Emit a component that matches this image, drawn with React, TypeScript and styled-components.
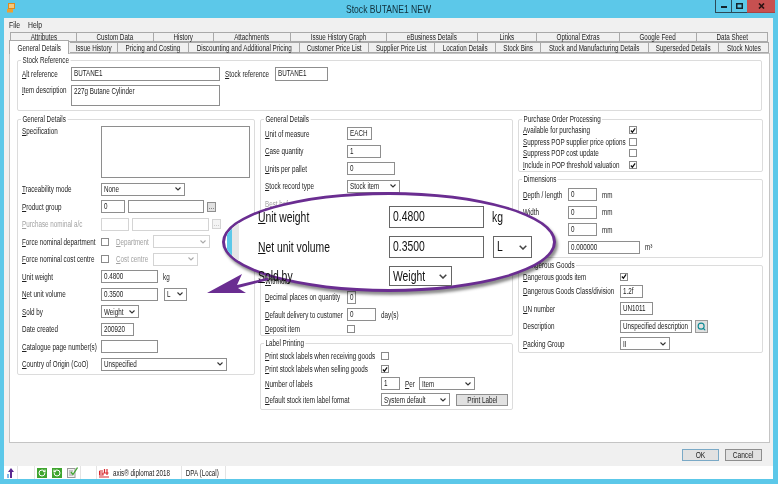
import React from 'react'
import styled, { createGlobalStyle } from 'styled-components'
import { RotateCw, RotateCcw, Search } from 'lucide-react'

const GlobalStyle = createGlobalStyle`
  html, body {
    margin: 0;
    padding: 0;
    background: #5cc8e9;
  }
  * {
    box-sizing: border-box;
  }
`

// the reference was squashed sideways, no installed font is that narrow
const SQUASH = 0.74

const Screen = styled.div`
  position: relative;
  width: 778px;
  height: 484px;
  overflow: hidden;
  display: flex;
  flex-direction: column;
  background: #5cc8e9;
  color: #222;
  font-family: 'Liberation Sans', Arial, sans-serif;
  font-size: 8.5px;
  filter: blur(0.3px);
`

const Squeeze = styled.span<{ $center?: boolean }>`
  display: inline-block;
  flex: none;
  white-space: nowrap;
  transform: scaleX(${SQUASH});
  transform-origin: ${(p) => (p.$center ? 'center' : 'left center')};
`

const TitleBar = styled.div`
  height: 18px;
  display: grid;
  grid-template-columns: 1fr auto 1fr;
  align-items: start;
`

const AppIcon = styled.svg`
  width: 9px;
  height: 10px;
  margin: 3px 0 0 7px;
`

const Title = styled.div`
  font-size: 11.6px;
  line-height: 18px;
  color: #10303c;
`

const Controls = styled.div`
  justify-self: end;
  display: flex;
  height: 13px;
  margin-right: 3px;
`

const Control = styled.div<{ $close?: boolean }>`
  width: ${(p) => (p.$close ? '28px' : '16px')};
  display: flex;
  align-items: center;
  justify-content: center;
  background: ${(p) => (p.$close ? '#c75050' : '#5cc8e9')};
  border: 1px solid ${(p) => (p.$close ? '#a94444' : '#2c4a58')};
  border-top: 0;
  border-right-width: 0;
  border-left-width: ${(p) => (p.$close ? '0' : '1px')};
`

const Client = styled.div`
  flex: 1;
  margin: 0 5px 5px 4px;
  display: flex;
  flex-direction: column;
  background: #f0f0f0;
`

const Menu = styled.div`
  height: 14px;
  display: flex;
  align-items: center;
  gap: 4px;
  padding: 0 0 1px 5px;
  font-size: 9.2px;
`

const TabRow = styled.div<{ $inset: number; $h: number }>`
  display: flex;
  align-items: flex-end;
  height: ${(p) => p.$h}px;
  margin-left: ${(p) => p.$inset}px;
`

const TabBox = styled.div<{ $w: number; $active?: boolean }>`
  position: relative;
  z-index: ${(p) => (p.$active ? 2 : 1)};
  flex: none;
  width: ${(p) => p.$w}px;
  height: ${(p) => (p.$active ? '14px' : '100%')};
  margin-bottom: ${(p) => (p.$active ? '-1px' : '0')};
  margin-right: ${(p) => (p.$active ? '1px' : '0')};
  display: flex;
  align-items: center;
  justify-content: center;
  background: ${(p) => (p.$active ? '#fff' : '#f0f0f0')};
  border: 1px solid #a9a9a9;
  border-left-width: ${(p) => (p.$active ? '1px' : '0')};
  border-bottom-width: ${(p) => (p.$active ? '0' : '1px')};

  &:first-child {
    border-left-width: 1px;
  }
`

const Panel = styled.div`
  flex: 1;
  margin: 0 3px 0 5px;
  padding: 6px 7px;
  display: flex;
  flex-direction: column;
  gap: 8px;
  background: #fff;
  border: 1px solid #c4c4c4;
`

const Group = styled.div<{ $h?: number; $top: number }>`
  position: relative;
  flex: none;
  height: ${(p) => (p.$h ? `${p.$h}px` : 'auto')};
  padding: ${(p) => p.$top}px 4px 0;
  border: 1px solid #dcdcdc;
  border-radius: 2px;
`

const GroupTitle = styled.div`
  position: absolute;
  top: -5px;
  left: 3px;
  padding: 0 2px;
  background: #fff;
  line-height: 9px;
  white-space: nowrap;
  transform: scaleX(${SQUASH});
  transform-origin: left center;
`

const Columns = styled.div`
  display: flex;
  gap: 5px;
  align-items: flex-start;
`

const Column = styled.div<{ $w: number }>`
  flex: none;
  width: ${(p) => p.$w}px;
  display: flex;
  flex-direction: column;
  gap: 7px;
`

const Stack = styled.div<{ $gap?: number }>`
  display: flex;
  flex-direction: column;
  gap: ${(p) => p.$gap ?? 4.5}px;
`

const Row = styled.div<{ $h?: number; $gap?: number; $end?: boolean }>`
  --gap: ${(p) => p.$gap ?? 5}px;
  flex: none;
  display: flex;
  align-items: ${(p) => (p.$end ? 'flex-end' : 'center')};
  height: ${(p) => p.$h ?? 13}px;
  gap: var(--gap);
`

const TopRow = styled(Row)`
  align-items: flex-start;
`

const SideCaption = styled.div<{ $w: number; $off?: boolean }>`
  flex: none;
  width: ${(p) => p.$w}px;
  color: ${(p) => (p.$off ? '#a2a2a2' : 'inherit')};
  white-space: nowrap;
  line-height: 10px;
  transform: scaleX(${SQUASH});
  transform-origin: left center;
`

// its width runs up to the first control of the row, so the row gap is taken back
const Caption = styled(SideCaption)`
  margin-right: calc(var(--gap) * -1);
`

const Unit = styled.div`
  white-space: nowrap;
  transform: scaleX(${SQUASH});
  transform-origin: left center;
`

const FieldBox = styled.div<{ $w: number; $h?: number; $off?: boolean }>`
  flex: none;
  width: ${(p) => p.$w}px;
  height: ${(p) => p.$h ?? 13}px;
  padding: 0 2px;
  line-height: 10px;
  overflow: hidden;
  background: #fff;
  border: 1px solid ${(p) => (p.$off ? '#d4d4d4' : '#8e8e8e')};
`

const SelectBox = styled.div<{ $w: number; $off?: boolean }>`
  flex: none;
  position: relative;
  width: ${(p) => p.$w}px;
  height: 13px;
  display: flex;
  align-items: center;
  padding: 0 2px;
  background: #fff;
  border: 1px solid ${(p) => (p.$off ? '#d4d4d4' : '#8e8e8e')};
`

const Chevron = styled.svg`
  position: absolute;
  right: 3px;
  top: 3.5px;
  width: 6px;
  height: 4px;
`

const EllipsisButton = styled.div<{ $off?: boolean }>`
  flex: none;
  width: 9px;
  height: 10px;
  display: flex;
  align-items: center;
  justify-content: center;
  font-size: 7px;
  line-height: 6px;
  color: ${(p) => (p.$off ? '#aaa' : '#333')};
  background: ${(p) => (p.$off ? '#f4f4f4' : '#e1e1e1')};
  border: 1px solid ${(p) => (p.$off ? '#d4d4d4' : '#8e8e8e')};
`

const CheckBox = styled.div`
  flex: none;
  width: 8px;
  height: 8px;
  display: flex;
  align-items: center;
  justify-content: center;
  background: #fff;
  border: 1px solid #8a8a8a;
`

const PrintButton = styled.div`
  flex: none;
  width: 52px;
  height: 12px;
  margin-left: 1px;
  display: flex;
  align-items: center;
  justify-content: center;
  background: #e1e1e1;
  border: 1px solid #8e8e8e;
`

const LookupButton = styled.div`
  flex: none;
  width: 13px;
  height: 13px;
  margin-left: -2px;
  display: flex;
  align-items: center;
  justify-content: center;
  color: #0f8a94;
  background: #e1e1e1;
  border: 1px solid #9a9a9a;
`

const Footer = styled.div`
  height: 23px;
  display: flex;
  justify-content: flex-end;
  gap: 6px;
  padding: 6px 11px 0 0;
`

const FooterButton = styled.div<{ $primary?: boolean }>`
  width: 37px;
  height: 12px;
  display: flex;
  align-items: center;
  justify-content: center;
  background: #e1e1e1;
  border: 1px solid ${(p) => (p.$primary ? '#7aa9c6' : '#8e8e8e')};
  font-size: 9px;
`

const StatusBar = styled.div`
  height: 13px;
  display: flex;
  align-items: center;
  background: #fff;
`

const StatusCell = styled.div<{ $w: number; $gap?: number }>`
  flex: none;
  width: ${(p) => p.$w}px;
  height: 100%;
  display: flex;
  align-items: center;
  gap: ${(p) => p.$gap ?? 0}px;
  padding-left: 2px;
  border-right: 1px solid #e4e4e4;

  svg {
    flex: none;
  }
`

const GreenTile = styled.div`
  width: 10px;
  height: 10px;
  display: flex;
  align-items: center;
  justify-content: center;
  background: #3fa52f;
  color: #fff;
`

const Lens = styled.div`
  position: absolute;
  isolation: isolate;
  left: 222px;
  top: 192px;
  width: 334px;
  height: 100px;
  padding: 14px 0 0 36px;
  display: flex;
  flex-direction: column;
  gap: 8px;
  font-size: 14px;
  color: #111;
`

const LensFill = styled.div`
  position: absolute;
  inset: 0;
  z-index: -1;
  overflow: hidden;
  display: flex;
  align-items: center;
  padding-left: 2px;
  background: #fff;
  border: 3px solid #6a2d91;
  border-radius: 50%;
  box-shadow: 2px 3px 3px rgba(0, 0, 0, 0.45);
`

const Sliver = styled.div`
  width: 12px;
  height: 100%;
  background: linear-gradient(90deg, #5cc8e9 0 5px, #e6e6e6 5px 12px);
`

const LensRow = styled.div<{ $h: number }>`
  flex: none;
  height: ${(p) => p.$h}px;
  display: flex;
  align-items: center;
`

const LensLabel = styled.div`
  flex: none;
  width: 131px;
  white-space: nowrap;
  transform: scaleX(${SQUASH});
  transform-origin: left center;
`

const LensField = styled.div<{ $w: number }>`
  position: relative;
  flex: none;
  width: ${(p) => p.$w}px;
  height: 100%;
  padding: 0 3px;
  line-height: 18px;
  background: #fff;
  border: 1px solid #666;
`

const LensChevron = styled.svg`
  position: absolute;
  right: 4px;
  top: 50%;
  width: 8px;
  height: 5px;
  margin-top: -2px;
`

const LensUnit = styled.div`
  margin-left: 8px;
  transform: scaleX(${SQUASH});
  transform-origin: left center;
`

const LensGap = styled.div`
  margin-left: 9px;
  height: 100%;
  display: flex;
`

const ArrowMark = styled.svg`
  position: absolute;
  left: 200px;
  top: 265px;
  width: 75px;
  height: 35px;
`

const Tab = ({ w, active, children }: { w: number; active?: boolean; children: string }) => (
  <TabBox $w={w} $active={active}>
    <Squeeze $center>{children}</Squeeze>
  </TabBox>
)

const Field = ({ w, h, off, children }: { w: number; h?: number; off?: boolean; children?: string }) => (
  <FieldBox $w={w} $h={h} $off={off}>
    <Squeeze>{children}</Squeeze>
  </FieldBox>
)

const Select = ({ w, off, children }: { w: number; off?: boolean; children?: string }) => (
  <SelectBox $w={w} $off={off}>
    <Squeeze>{children}</Squeeze>
    <Chevron viewBox="0 0 6 4">
      <path d="M0.5 0.5 L3 3 L5.5 0.5" fill="none" stroke={off ? '#aaa' : '#333'} strokeWidth="1.1" />
    </Chevron>
  </SelectBox>
)

const Check = () => (
  <CheckBox>
    <svg width="7" height="7" viewBox="0 0 7 7">
      <path d="M1 3.5 L2.8 5.5 L6 1" fill="none" stroke="#111" strokeWidth="1.4" />
    </svg>
  </CheckBox>
)

const LensCaret = () => (
  <LensChevron viewBox="0 0 8 5">
    <path d="M0.7 0.7 L4 4 L7.3 0.7" fill="none" stroke="#444" strokeWidth="1.5" />
  </LensChevron>
)

const Hot = ({ children }: { children: string }) => (
  <>
    <u>{children[0]}</u>
    {children.slice(1)}
  </>
)

const topTabs: [string, number][] = [
  ['Attributes', 67],
  ['Custom Data', 77],
  ['History', 60],
  ['Attachments', 77],
  ['Issue History Graph', 96],
  ['eBusiness Details', 91],
  ['Links', 59],
  ['Optional Extras', 83],
  ['Google Feed', 77],
  ['Data Sheet', 71],
]

const lowerTabs: [string, number][] = [
  ['Issue History', 48],
  ['Pricing and Costing', 71],
  ['Discounting and Additional Pricing', 111],
  ['Customer Price List', 69],
  ['Supplier Price List', 66],
  ['Location Details', 61],
  ['Stock Bins', 45],
  ['Stock and Manufacturing Details', 108],
  ['Superseded Details', 70],
  ['Stock Notes', 50],
]

const LEFT = 79
const MID = 82
const PRINT = 116
const POP = 106
const DIM = 45
const DANGER = 97

export default function App() {
  return (
    <Screen>
      <GlobalStyle />
      <TitleBar>
        <AppIcon viewBox="0 0 9 10">
          <rect x="1.5" y="0.5" width="6" height="5" fill="#f6c77a" stroke="#e08a1e" />
          <rect x="0" y="6" width="6" height="3.5" fill="#f0a030" />
        </AppIcon>
        <Title>
          <Squeeze $center>Stock BUTANE1 NEW</Squeeze>
        </Title>
        <Controls>
          <Control>
            <svg width="6" height="3" viewBox="0 0 6 3">
              <rect y="1" width="6" height="2" fill="#14242c" />
            </svg>
          </Control>
          <Control>
            <svg width="7" height="6" viewBox="0 0 7 6">
              <rect x="0.75" y="0.75" width="5.5" height="4.5" fill="none" stroke="#14242c" strokeWidth="1.5" />
            </svg>
          </Control>
          <Control $close>
            <svg width="7" height="6" viewBox="0 0 7 6">
              <path d="M1 0.5 L6 5.5 M6 0.5 L1 5.5" stroke="#2a1212" strokeWidth="1.6" />
            </svg>
          </Control>
        </Controls>
      </TitleBar>

      <Client>
        <Menu>
          <Squeeze>File</Squeeze>
          <Squeeze>Help</Squeeze>
        </Menu>
        <TabRow $inset={6} $h={10}>
          {topTabs.map(([name, w]) => (
            <Tab key={name} w={w}>
              {name}
            </Tab>
          ))}
        </TabRow>
        <TabRow $inset={5} $h={11}>
          <Tab w={60} active>
            General Details
          </Tab>
          {lowerTabs.map(([name, w]) => (
            <Tab key={name} w={w}>
              {name}
            </Tab>
          ))}
        </TabRow>

        <Panel>
          <Group $top={6}>
            <GroupTitle>Stock Reference</GroupTitle>
            <Stack $gap={4}>
              <Row $h={14}>
                <Caption $w={49}>
                  <Hot>Alt reference</Hot>
                </Caption>
                <Field w={149} h={14}>BUTANE1</Field>
                <SideCaption $w={45}>
                  <Hot>Stock reference</Hot>
                </SideCaption>
                <Field w={53} h={14}>BUTANE1</Field>
              </Row>
              <TopRow $h={21}>
                <Caption $w={49}>
                  <Hot>Item description</Hot>
                </Caption>
                <Field w={149} h={21}>227g Butane Cylinder</Field>
              </TopRow>
            </Stack>
            <Row $h={4} />
          </Group>

          <Columns>
            <Column $w={238}>
              <Group $top={6} $h={256}>
                <GroupTitle>General Details</GroupTitle>
                <Stack>
                  <TopRow $h={52}>
                    <Caption $w={LEFT}>
                      <Hot>Specification</Hot>
                    </Caption>
                    <Field w={149} h={52} />
                  </TopRow>
                  <Row>
                    <Caption $w={LEFT}>
                      <Hot>Traceability mode</Hot>
                    </Caption>
                    <Select w={84}>None</Select>
                  </Row>
                  <Row $gap={3}>
                    <Caption $w={LEFT}>
                      <Hot>Product group</Hot>
                    </Caption>
                    <Field w={24}>0</Field>
                    <Field w={76} />
                    <EllipsisButton>...</EllipsisButton>
                  </Row>
                  <Row $gap={3}>
                    <Caption $w={LEFT} $off>
                      <Hot>Purchase nominal a/c</Hot>
                    </Caption>
                    <Field w={28} off />
                    <Field w={77} off />
                    <EllipsisButton $off>...</EllipsisButton>
                  </Row>
                  <Row $gap={7}>
                    <Caption $w={LEFT}>
                      <Hot>Force nominal department</Hot>
                    </Caption>
                    <CheckBox />
                    <SideCaption $w={30} $off>
                      <Hot>Department</Hot>
                    </SideCaption>
                    <Select w={57} off />
                  </Row>
                  <Row $gap={7}>
                    <Caption $w={LEFT}>
                      <Hot>Force nominal cost centre</Hot>
                    </Caption>
                    <CheckBox />
                    <SideCaption $w={30} $off>
                      <Hot>Cost centre</Hot>
                    </SideCaption>
                    <Select w={45} off />
                  </Row>
                  <Row>
                    <Caption $w={LEFT}>
                      <Hot>Unit weight</Hot>
                    </Caption>
                    <Field w={57}>0.4800</Field>
                    <Unit>kg</Unit>
                  </Row>
                  <Row $gap={6}>
                    <Caption $w={LEFT}>
                      <Hot>Net unit volume</Hot>
                    </Caption>
                    <Field w={57}>0.3500</Field>
                    <Select w={23}>L</Select>
                  </Row>
                  <Row>
                    <Caption $w={LEFT}>
                      <Hot>Sold by</Hot>
                    </Caption>
                    <Select w={38}>Weight</Select>
                  </Row>
                  <Row>
                    <Caption $w={LEFT}>Date created</Caption>
                    <Field w={33}>200920</Field>
                  </Row>
                  <Row>
                    <Caption $w={LEFT}>
                      <Hot>Catalogue page number(s)</Hot>
                    </Caption>
                    <Field w={57} />
                  </Row>
                  <Row>
                    <Caption $w={LEFT}>
                      <Hot>Country of Origin (CoO)</Hot>
                    </Caption>
                    <Select w={126}>Unspecified</Select>
                  </Row>
                </Stack>
              </Group>
            </Column>

            <Column $w={253}>
              <Group $top={7} $h={217}>
                <GroupTitle>General Details</GroupTitle>
                <Stack>
                  <Row>
                    <Caption $w={MID}>
                      <Hot>Unit of measure</Hot>
                    </Caption>
                    <Field w={25}>EACH</Field>
                  </Row>
                  <Row>
                    <Caption $w={MID}>
                      <Hot>Case quantity</Hot>
                    </Caption>
                    <Field w={34}>1</Field>
                  </Row>
                  <Row>
                    <Caption $w={MID}>
                      <Hot>Units per pallet</Hot>
                    </Caption>
                    <Field w={48}>0</Field>
                  </Row>
                  <Row>
                    <Caption $w={MID}>
                      <Hot>Stock record type</Hot>
                    </Caption>
                    <Select w={53}>Stock item</Select>
                  </Row>
                  <Row>
                    <Caption $w={MID} $off>
                      <Hot>Best before days</Hot>
                    </Caption>
                  </Row>
                  <Row $h={54} />
                  <Row $end>
                    <Caption $w={MID}>
                      <Hot>Withhold</Hot>
                    </Caption>
                  </Row>
                  <Row>
                    <Caption $w={MID}>
                      <Hot>Decimal places on quantity</Hot>
                    </Caption>
                    <Field w={9}>0</Field>
                  </Row>
                  <Row>
                    <Caption $w={MID}>
                      <Hot>Default delivery to customer</Hot>
                    </Caption>
                    <Field w={29}>0</Field>
                    <Unit>day(s)</Unit>
                  </Row>
                  <Row $h={7}>
                    <Caption $w={MID}>
                      <Hot>Deposit item</Hot>
                    </Caption>
                    <CheckBox />
                  </Row>
                </Stack>
              </Group>
              <Group $top={7} $h={67}>
                <GroupTitle>Label Printing</GroupTitle>
                <Stack $gap={3}>
                  <Row $h={10}>
                    <Caption $w={PRINT}>
                      <Hot>Print stock labels when receiving goods</Hot>
                    </Caption>
                    <CheckBox />
                  </Row>
                  <Row $h={10}>
                    <Caption $w={PRINT}>
                      <Hot>Print stock labels when selling goods</Hot>
                    </Caption>
                    <Check />
                  </Row>
                  <Row>
                    <Caption $w={PRINT}>
                      <Hot>Number of labels</Hot>
                    </Caption>
                    <Field w={19}>1</Field>
                    <SideCaption $w={9}>
                      <Hot>Per</Hot>
                    </SideCaption>
                    <Select w={56}>Item</Select>
                  </Row>
                  <Row>
                    <Caption $w={PRINT}>
                      <Hot>Default stock item label format</Hot>
                    </Caption>
                    <Select w={69}>System default</Select>
                    <PrintButton>
                      <Squeeze $center>Print Label</Squeeze>
                    </PrintButton>
                  </Row>
                </Stack>
              </Group>
            </Column>

            <Column $w={245}>
              <Group $top={5} $h={53}>
                <GroupTitle>Purchase Order Processing</GroupTitle>
                <Stack $gap={1.7}>
                  <Row $h={10}>
                    <Caption $w={POP}>
                      <Hot>Available for purchasing</Hot>
                    </Caption>
                    <Check />
                  </Row>
                  <Row $h={10}>
                    <Caption $w={POP}>
                      <Hot>Suppress POP supplier price options</Hot>
                    </Caption>
                    <CheckBox />
                  </Row>
                  <Row $h={10}>
                    <Caption $w={POP}>
                      <Hot>Suppress POP cost update</Hot>
                    </Caption>
                    <CheckBox />
                  </Row>
                  <Row $h={10}>
                    <Caption $w={POP}>
                      <Hot>Include in POP threshold valuation</Hot>
                    </Caption>
                    <Check />
                  </Row>
                </Stack>
              </Group>
              <Group $top={8} $h={79}>
                <GroupTitle>Dimensions</GroupTitle>
                <Stack>
                  <Row>
                    <Caption $w={DIM}>
                      <Hot>Depth / length</Hot>
                    </Caption>
                    <Field w={29}>0</Field>
                    <Unit>mm</Unit>
                  </Row>
                  <Row>
                    <Caption $w={DIM}>
                      <Hot>Width</Hot>
                    </Caption>
                    <Field w={29}>0</Field>
                    <Unit>mm</Unit>
                  </Row>
                  <Row>
                    <Caption $w={DIM}>
                      <Hot>Height</Hot>
                    </Caption>
                    <Field w={29}>0</Field>
                    <Unit>mm</Unit>
                  </Row>
                  <Row>
                    <Caption $w={DIM}>Volume</Caption>
                    <Field w={72}>0.000000</Field>
                    <Unit>m³</Unit>
                  </Row>
                </Stack>
              </Group>
              <Group $top={7} $h={88}>
                <GroupTitle>Dangerous Goods</GroupTitle>
                <Stack>
                  <Row $h={7}>
                    <Caption $w={DANGER}>
                      <Hot>Dangerous goods item</Hot>
                    </Caption>
                    <Check />
                  </Row>
                  <Row>
                    <Caption $w={DANGER}>
                      <Hot>Dangerous Goods Class/division</Hot>
                    </Caption>
                    <Field w={23}>1.2f</Field>
                  </Row>
                  <Row>
                    <Caption $w={DANGER}>
                      <Hot>UN number</Hot>
                    </Caption>
                    <Field w={33}>UN1011</Field>
                  </Row>
                  <Row>
                    <Caption $w={DANGER}>Description</Caption>
                    <Field w={72}>Unspecified description</Field>
                    <LookupButton>
                      <Search size={9} strokeWidth={3} />
                    </LookupButton>
                  </Row>
                  <Row>
                    <Caption $w={DANGER}>
                      <Hot>Packing Group</Hot>
                    </Caption>
                    <Select w={50}>II</Select>
                  </Row>
                </Stack>
              </Group>
            </Column>
          </Columns>
        </Panel>

        <Footer>
          <FooterButton $primary>
            <Squeeze $center>OK</Squeeze>
          </FooterButton>
          <FooterButton>
            <Squeeze $center>Cancel</Squeeze>
          </FooterButton>
        </Footer>

        <StatusBar>
          <StatusCell $w={14}>
            <svg width="10" height="10" viewBox="0 0 10 10">
              <path d="M4 10 V4 H2 L5 0 L8 4 H6 V10 Z" fill="#5b2a91" />
              <path d="M1 10 V6 H3 V10 Z" fill="#7fb7e8" />
            </svg>
          </StatusCell>
          <StatusCell $w={17} />
          <StatusCell $w={46} $gap={5}>
            <GreenTile>
              <RotateCw size={8} strokeWidth={3} />
            </GreenTile>
            <GreenTile>
              <RotateCcw size={8} strokeWidth={3} />
            </GreenTile>
            <svg width="11" height="11" viewBox="0 0 11 11">
              <rect x="0.5" y="1.5" width="7.5" height="9" fill="#f2f2f2" stroke="#9a9a9a" />
              <path d="M2 4 H6 M2 6 H5 M2 8 H6" stroke="#9a9a9a" />
              <path d="M4 5 L6 7.5 L10.5 0.5" fill="none" stroke="#3fa52f" strokeWidth="1.3" />
            </svg>
          </StatusCell>
          <StatusCell $w={16} />
          <StatusCell $w={85} $gap={4}>
            <svg width="10" height="10" viewBox="0 0 10 10">
              <path d="M0.5 3 H4 M0.5 3 V7 H4 V5 H1 M5.5 1 L5.5 5 H9.5 M8 1 V7 M0 9 H10" fill="none" stroke="#d8262c" strokeWidth="1.2" />
            </svg>
            <Squeeze>axis® diplomat 2018</Squeeze>
          </StatusCell>
          <StatusCell $w={44}>
            <Squeeze>&nbsp;DPA (Local)</Squeeze>
          </StatusCell>
        </StatusBar>
      </Client>

      <Lens>
        <LensFill>
          <Sliver />
        </LensFill>
        <LensRow $h={22}>
          <LensLabel>
            <Hot>Unit weight</Hot>
          </LensLabel>
          <LensField $w={95}>
            <Squeeze>0.4800</Squeeze>
          </LensField>
          <LensUnit>kg</LensUnit>
        </LensRow>
        <LensRow $h={22}>
          <LensLabel>
            <Hot>Net unit volume</Hot>
          </LensLabel>
          <LensField $w={95}>
            <Squeeze>0.3500</Squeeze>
          </LensField>
          <LensGap>
            <LensField $w={39}>
              <Squeeze>L</Squeeze>
              <LensCaret />
            </LensField>
          </LensGap>
        </LensRow>
        <LensRow $h={20}>
          <LensLabel>
            <Hot>Sold by</Hot>
          </LensLabel>
          <LensField $w={63}>
            <Squeeze>Weight</Squeeze>
            <LensCaret />
          </LensField>
        </LensRow>
      </Lens>

      <ArrowMark viewBox="0 0 75 35">
        <path d="M7 28 L42 9 L37 20 L68 12.5 L68.6 15 L38 23 L46 28 Z" fill="#6a2d91" />
      </ArrowMark>
    </Screen>
  )
}
